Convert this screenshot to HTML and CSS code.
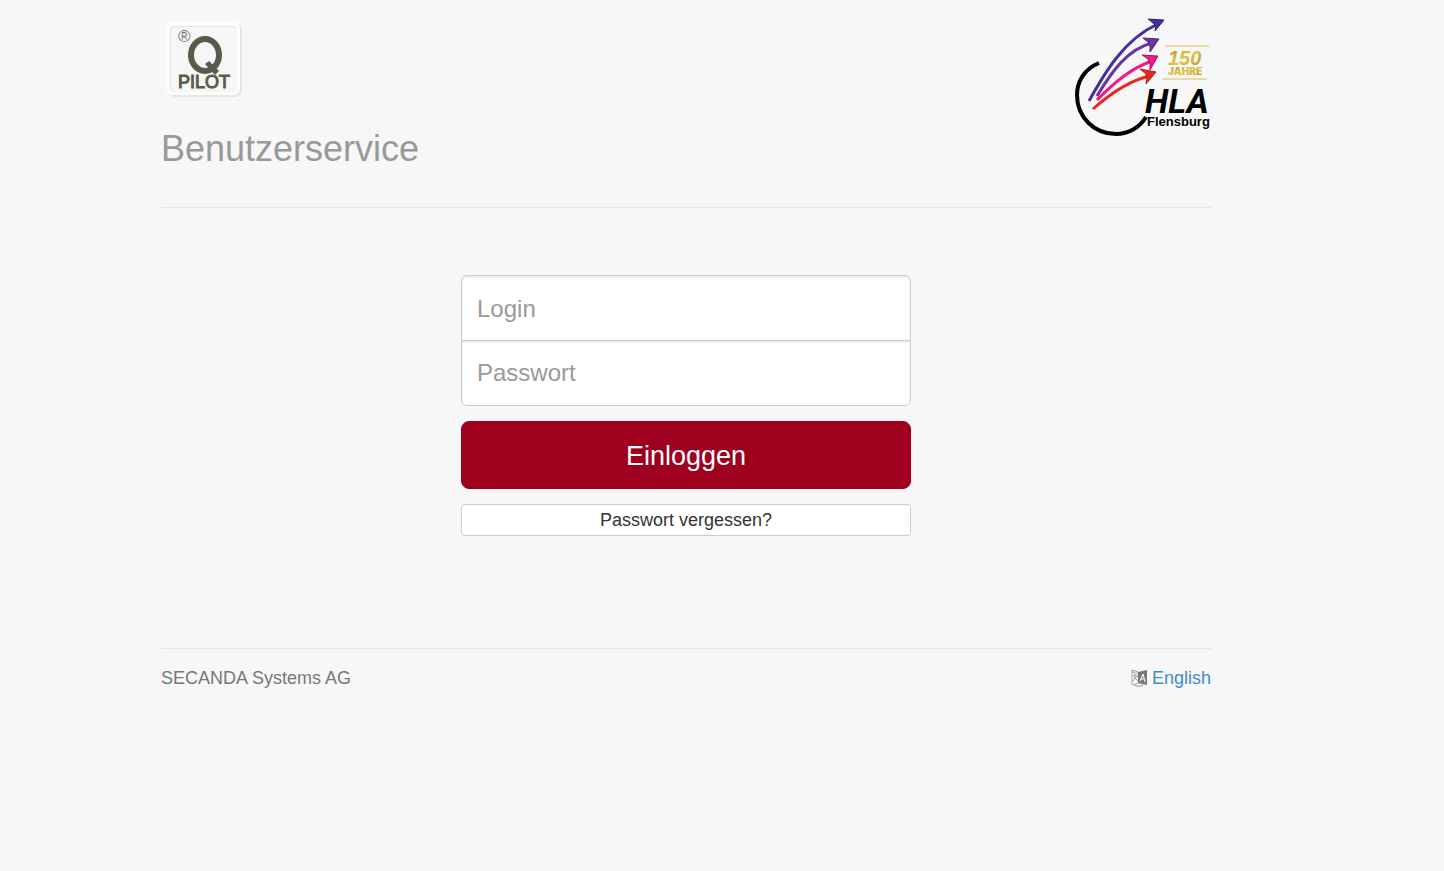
FILE: index.html
```
<!DOCTYPE html>
<html lang="de">
<head>
    <meta charset="utf-8">
    <title>Benutzerservice</title>
    <link rel="stylesheet" href="styles.css">
</head>
<body>
<div class="container">

    <header class="header">
        <div class="brand">
            <svg class="logo-pilot" viewBox="0 0 86 86" role="img" aria-label="Q Pilot">
                <rect x="7" y="6" width="74" height="73" rx="7" fill="#e6e6e6"/>
                <rect x="5" y="4" width="74" height="73" rx="7" fill="#fefefe"/>
                <rect x="9" y="8" width="67" height="66" rx="4" fill="#e4e4e4"/>
                <rect x="10" y="9" width="66" height="65" rx="4" fill="#f6f6f6"/>
                <text x="17" y="24" class="pilot-mark">®</text>
                <ellipse cx="44" cy="37" rx="14" ry="16" fill="none" stroke="#5a5a4b" stroke-width="6"/>
                <path d="M44 46l4-3 10 10-4 4z" fill="#5a5a4b"/>
                <text x="17" y="70" class="pilot-name">PILOT</text>
            </svg>
            <h1>Benutzerservice</h1>
        </div>
        <svg class="logo-school" viewBox="0 0 136 118" role="img" aria-label="HLA Flensburg">
            <defs>
                <linearGradient id="gold" x1="0" y1="0" x2="1" y2="1">
                    <stop offset="0" stop-color="#b98a1e"/>
                    <stop offset="0.5" stop-color="#e0c548"/>
                    <stop offset="1" stop-color="#b98f25"/>
                </linearGradient>
            </defs>
            <path d="M24 45C9 51 2 64 2 77C2 99 19 116 41 116C54 116 65 109 71 99" fill="none" stroke="#000" stroke-width="4"/>
            <g fill="none" stroke-width="3">
                <path d="M14 83C29 56 49 21 83 6" stroke="#43309a"/>
                <path d="M22 78C37 53 53 31 77 25" stroke="#6a35a2"/>
                <path d="M22 82C39 65 56 50 77 43" stroke="#f01a88"/>
                <path d="M18 91C36 75 54 63 74 58" stroke="#e62a20"/>
            </g>
            <g stroke-width="1" stroke-linejoin="round">
                <path d="M89 2L73 1L78 5L81 8L80 13Z" fill="#43309a" stroke="#30246e"/>
                <path d="M84 21L68 20L73 24L75 28L75 34Z" fill="#6a35a2" stroke="#4b2679"/>
                <path d="M83 38L67 37L73 41L75 46L75 52Z" fill="#f01a88" stroke="#a8156a"/>
                <path d="M81 54L65 51L71 56L72 60L71 66Z" fill="#e62a20" stroke="#a82226"/>
            </g>
            <path d="M90 28H134M87 61H132" stroke="#ead9a2" stroke-width="2"/>
            <text x="93" y="47" class="school-years">150</text>
            <text x="93" y="57" class="school-label">JAHRE</text>
            <text x="70" y="95" class="school-name">HLA</text>
            <text x="72" y="108" class="school-city">Flensburg</text>
        </svg>
    </header>

    <form class="login" action="#" method="post">
        <div class="fields">
            <input type="text" name="login" placeholder="Login" aria-label="Login">
            <input type="password" name="password" placeholder="Passwort" aria-label="Passwort">
        </div>
        <button type="submit" class="btn btn-primary">Einloggen</button>
        <button type="button" class="btn btn-default">Passwort vergessen?</button>
    </form>

    <footer class="footer">
        <span>SECANDA Systems AG</span>
        <div class="language">
            <svg class="icon" viewBox="0 0 16 18" aria-hidden="true">
                <path d="M1 3l7 2v9l-7 2z" fill="#f7f7f7" stroke="#aaa"/>
                <path d="M7 3l9-2v15l-9-2z" fill="#777"/>
                <path d="M2 7l5 0M4 5v2M6 7l-4 5M3 8l4 4" fill="none" stroke="#999"/>
                <path d="M9 12l3-7 2 8M10 10l3 0" fill="none" stroke="#fff"/>
                <path d="M1 3v-2l6 2M3 16q4 3 9 0" fill="none" stroke="#999"/>
            </svg>
            <a href="#">English</a>
        </div>
    </footer>

</div>
</body>
</html>
```
FILE: styles.css
```
* {
    box-sizing: border-box;
}

body {
    margin: 0;
    padding: 18px 72px 30px 0;
    background-color: #f7f7f7;
    color: #777;
    font-family: "Liberation Sans", Arial, sans-serif;
    font-size: 18px;
    line-height: 26px;
}

.container {
    max-width: 1050px;
    margin: 0 auto;
}

/* logos and page title */
.header {
    display: flex;
    justify-content: space-between;
    align-items: flex-start;
    padding-bottom: 38px;
    border-bottom: 1px solid #e5e5e5;
}

.logo-pilot {
    display: block;
    width: 86px;
    height: 86px;
}

.logo-school {
    width: 136px;
    height: 118px;
}

h1 {
    margin: 25px 0 0;
    color: #999;
    font-size: 36px;
    font-weight: normal;
    line-height: 40px;
}

.pilot-mark {
    font-size: 17px;
    fill: #77776c;
}

.pilot-name {
    font-size: 18px;
    fill: #5a5a4b;
    stroke: #5a5a4b;
}

.school-years {
    font-family: "Liberation Sans", sans-serif;
    font-size: 20px;
    font-weight: bold;
    font-style: italic;
    fill: url(#gold);
}

.school-label {
    font-family: Inter, "Liberation Sans", sans-serif;
    font-size: 10px;
    font-weight: 900;
    fill: url(#gold);
}

.school-name {
    font-family: Roboto, "Liberation Sans", sans-serif;
    font-size: 34px;
    font-weight: bold;
    font-style: italic;
    fill: #000;
}

.school-city {
    font-size: 13px;
    font-weight: bold;
    fill: #000;
}

/* login form */
.login {
    display: flex;
    flex-direction: column;
    gap: 15px;
    max-width: 450px;
    margin: 67px auto 112px;
}

.fields input {
    display: block;
    width: 100%;
    height: 66px;
    padding: 16px 15px 14px;
    border: 1px solid #ccc;
    border-radius: 6px 6px 0 0;
    background-color: #fff;
    box-shadow: inset 0 2px 2px rgba(0, 0, 0, 0.08);
    color: #555;
    font-family: inherit;
    font-size: 24px;
}

.fields input + input {
    margin-top: -1px;
    padding: 15px;
    border-radius: 0 0 6px 6px;
}

.fields input::placeholder {
    color: #999;
}

.btn {
    width: 100%;
    border: 1px solid #ccc;
    border-radius: 4px;
    font-family: inherit;
    cursor: pointer;
}

.btn-primary {
    height: 68px;
    padding-top: 3px;
    border-color: #9e001e;
    border-radius: 8px;
    background-color: #9e001e;
    color: #fff;
    font-size: 27px;
}

.btn-default {
    height: 32px;
    background-color: #fff;
    color: #333;
    font-size: 18px;
}

.footer {
    display: flex;
    justify-content: space-between;
    padding-top: 16px;
    border-top: 1px solid #e5e5e5;
}

.language {
    display: flex;
    align-items: center;
    gap: 5px;
}

.icon {
    width: 16px;
    height: 18px;
}

.language a {
    color: #428bca;
    text-decoration: none;
}
```
